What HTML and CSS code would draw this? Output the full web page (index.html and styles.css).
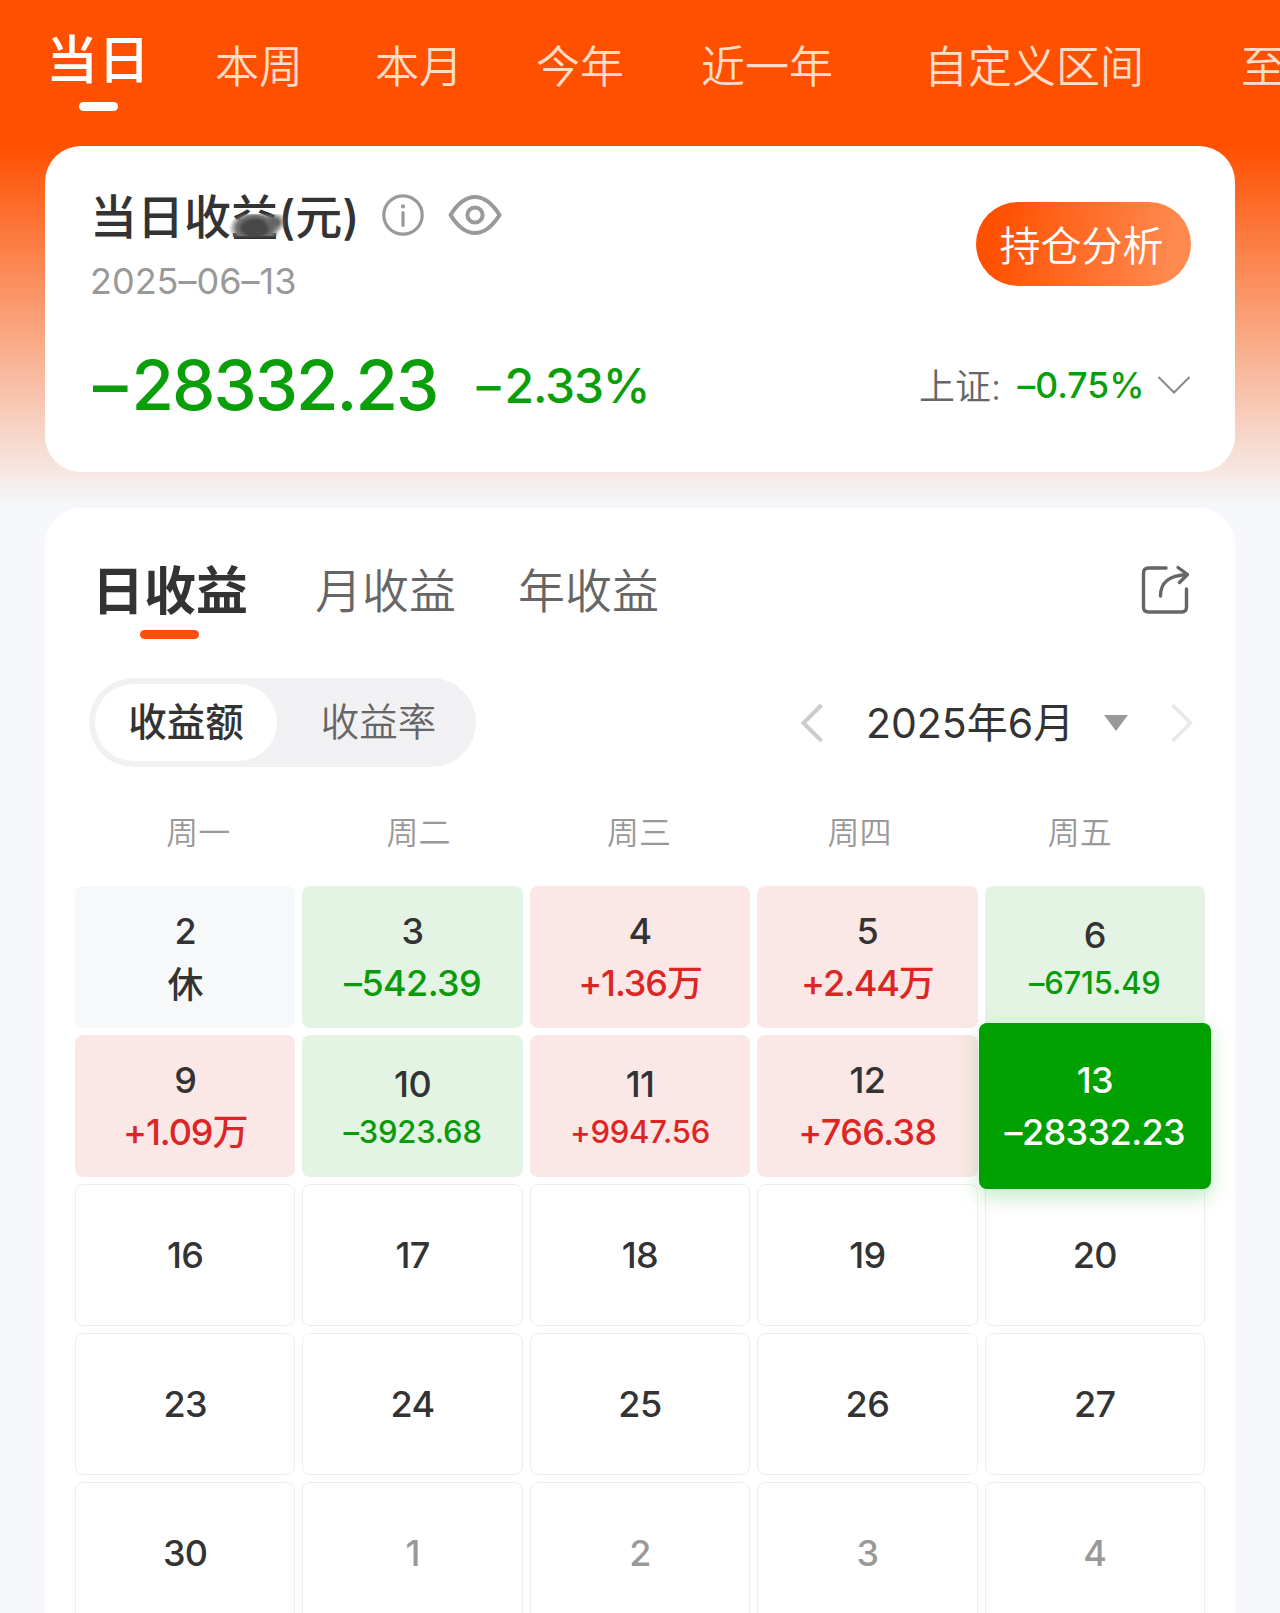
FILE: index.html
```html
<!DOCTYPE html>
<html lang="zh-CN">
<head>
<meta charset="utf-8">
<title>当日收益</title>
<link rel="stylesheet" href="styles.css">
</head>
<body>
<div class="page">
  <nav class="periods">
    <span class="period active">当日</span>
    <span class="period week">本周</span>
    <span class="period month">本月</span>
    <span class="period year">今年</span>
    <span class="period last-year">近一年</span>
    <span class="period custom">自定义区间</span>
    <span class="period since">至</span>
  </nav>

  <section class="card summary">
    <div class="summary-head">
      <div>
        <div class="title-row">
          <h1 class="title">当日收<span class="smudged">益</span>(元)</h1>
          <svg class="info" width="42" height="42" viewBox="0 0 42 42" fill="none" stroke="#999" stroke-width="3.2"><circle cx="21" cy="21" r="19.2"/><path d="M21 18.5v13" stroke-linecap="round"/><circle cx="21" cy="12.4" r="2.1" fill="#999" stroke="none"/></svg>
          <svg class="eye" width="54" height="42" viewBox="0 0 54 42" fill="none" stroke="#999" stroke-width="4"><path d="M2.500 21C10 9 18.500 3 27 3S44 9 51.500 21C44 33 35.500 39 27 39S10 33 2.500 21Z" stroke-linejoin="round"/><circle cx="27" cy="21" r="7.600"/></svg>
        </div>
        <div class="date">2025–06–13</div>
      </div>
      <button class="analysis">持仓分析</button>
    </div>
    <div class="figures">
      <span class="amount"><span class="sign">–</span>28332.23</span>
      <span class="rate"><span class="sign">–</span>2.33%</span>
      <span class="index-name">上证:</span>
      <span class="index-rate">–0.75%</span>
      <svg class="expand" width="34" height="20" viewBox="0 0 34 20" fill="none" stroke="#888" stroke-width="2"><path d="M1.500 2L17 17.500 32.500 2"/></svg>
    </div>
  </section>

  <section class="card detail">
    <div class="tabs">
      <span class="tab current">日收益</span>
      <span class="tab monthly">月收益</span>
      <span class="tab yearly">年收益</span>
      <svg class="share" width="50" height="50" viewBox="0 0 50 50" fill="none" stroke="#666" stroke-width="3.400" stroke-linecap="round" stroke-linejoin="round"><path d="M25 3H7.500Q2.500 3 2.500 8V42Q2.500 47 7.500 47H40.500Q45.500 47 45.500 42V24"/><path d="M19.500 31C19.500 18 27 10.500 46 9.500"/><path d="M37 2.500L46.500 9.500 38.500 17.500"/></svg>
    </div>
    <div class="controls">
      <div class="segment">
        <span class="option selected">收益额</span>
        <span class="option">收益率</span>
      </div>
      <div class="picker">
        <svg width="24" height="40" viewBox="0 0 24 40" fill="none" stroke="#ccc" stroke-width="4"><path d="M21.500 2L3.500 20l18 18"/></svg>
        <span class="month-name">2025年6月</span>
        <svg class="caret" width="24" height="16" viewBox="0 0 24 16" fill="#999"><path d="M0 0h24L12 16z"/></svg>
        <svg class="next" width="24" height="40" viewBox="0 0 24 40" fill="none" stroke="#e8e8e8" stroke-width="3.600"><path d="M2.500 2l18 18-18 18"/></svg>
      </div>
    </div>
    <div class="weekdays"><span>周一</span><span>周二</span><span>周三</span><span>周四</span><span>周五</span></div>
    <div class="calendar">
      <div class="day rest"><b>2</b><i>休</i></div>
      <div class="day loss"><b>3</b><i>–542.39</i></div>
      <div class="day gain"><b>4</b><i class="wan">+1.36万</i></div>
      <div class="day gain"><b>5</b><i class="wan">+2.44万</i></div>
      <div class="day loss"><b>6</b><i class="small">–6715.49</i></div>
      <div class="day gain"><b>9</b><i class="wan">+1.09万</i></div>
      <div class="day loss"><b>10</b><i class="small">–3923.68</i></div>
      <div class="day gain"><b>11</b><i class="small">+9947.56</i></div>
      <div class="day gain"><b>12</b><i>+766.38</i></div>
      <div class="day today"><b>13</b><i>–28332.23</i></div>
      <div class="day"><b>16</b></div>
      <div class="day"><b>17</b></div>
      <div class="day"><b>18</b></div>
      <div class="day"><b>19</b></div>
      <div class="day"><b>20</b></div>
      <div class="day"><b>23</b></div>
      <div class="day"><b>24</b></div>
      <div class="day"><b>25</b></div>
      <div class="day"><b>26</b></div>
      <div class="day"><b>27</b></div>
      <div class="day"><b>30</b></div>
      <div class="day other"><b>1</b></div>
      <div class="day other"><b>2</b></div>
      <div class="day other"><b>3</b></div>
      <div class="day other"><b>4</b></div>
    </div>
  </section>
</div>
</body>
</html>
```
FILE: styles.css
```css
* { box-sizing: border-box; }

body {
  margin: 0;
  background: #f5f7fa;
  color: #333;
  font-family: Inter, "Noto Sans CJK SC", sans-serif;
  font-feature-settings: "calt" 0;
}

svg { display: block; flex: none; }

.page {
  width: 1280px;
  height: 1613px;
  overflow: hidden;
  background: linear-gradient(#ff5000 146px, #f5f7fa 506px);
}

/* period tabs */
.periods {
  display: flex;
  height: 146px;
  padding-left: 46px;
  white-space: nowrap;
}

.period {
  flex: none;
  font-size: 44px;
  line-height: 135px;
  font-weight: 350;
  color: #ffdcc8;
}

.period.active {
  position: relative;
  width: 101px;
  font-size: 52px;
  line-height: 121px;
  font-weight: 500;
  color: #fff;
}

.period.active::after {
  content: "";
  position: absolute;
  left: 33px;
  top: 102px;
  width: 39px;
  height: 9px;
  border-radius: 4.5px;
  background: #fff;
}

.week { margin-left: 68px; }
.month { margin-left: 72px; }
.year { margin-left: 73px; }
.last-year { margin-left: 77px; }
.custom { margin-left: 91px; }
.since { margin-left: 97px; }

.card {
  width: 1190px;
  margin: 0 auto;
  border-radius: 36px;
  background: #fff;
}

/* summary */
.summary {
  height: 326px;
  padding: 40px 44px 0 45px;
}

.summary-head {
  display: flex;
  justify-content: space-between;
  height: 140px;
}

.title-row {
  display: flex;
  align-items: center;
  height: 58px;
}

.title {
  margin: 0;
  width: 270px;
  font-size: 47px;
  line-height: 58px;
  padding-top: 3px;
  font-weight: 500;
  white-space: nowrap;
}

.smudged { position: relative; }

.smudged::after {
  content: "";
  position: absolute;
  left: -2px;
  top: 26px;
  width: 56px;
  height: 25px;
  background:
    linear-gradient(#4a4a4a, #2c2c2c) 5px 22px / 42px 3px no-repeat,
    radial-gradient(ellipse 12px 10px at 46px 8px, #666 30%, transparent),
    radial-gradient(ellipse 26px 17px at 26px 14px, #484848 45%, #777 72%, transparent);
}

.info { margin-left: 22px; }
.eye { margin-left: 24px; }

.date {
  font-size: 36px;
  line-height: 74px;
  font-weight: 370;
  color: #999;
}

.analysis {
  width: 215px;
  height: 84px;
  margin-top: 16px;
  padding: 3px 4px 0 0;
  border: 0;
  border-radius: 42px;
  background: linear-gradient(100deg, #ff5000 10%, #ff8a50 90%);
  color: #fff;
  font: 350 41px/80px Inter, "Noto Sans CJK SC", sans-serif;
}

.figures {
  display: flex;
  align-items: center;
  height: 118px;
  color: #0a9f0a;
  font-weight: 500;
  white-space: nowrap;
}

.amount { width: 385px; padding-left: 3px; font-size: 69px; letter-spacing: -2px; }
.amount .sign { letter-spacing: 4px; }
.rate { width: 447px; padding-left: 3px; font-size: 48px; letter-spacing: -1.2px; }
.rate .sign { letter-spacing: 4px; }
.index-name { width: 99px; padding-bottom: 3px; font-size: 36px; font-weight: 350; color: #666; }
.index-rate { width: 140px; font-size: 35.500px; }

/* detail */
.detail {
  height: 1200px;
  margin-top: 36px;
}

.tabs {
  display: flex;
  align-items: center;
  height: 164px;
  padding: 0 44px 0 47px;
}

.tab {
  padding-top: 1px;
  font-size: 47px;
  line-height: 60px;
  font-weight: 350;
  color: #666;
}

.current {
  position: relative;
  padding-top: 4px;
  font-size: 52px;
  font-weight: 700;
  color: #333;
}

.current::after {
  content: "";
  position: absolute;
  left: 48px;
  top: 72px;
  width: 59px;
  height: 9px;
  border-radius: 4.5px;
  background: #ff4f0f;
}

.monthly { margin-left: 67px; }
.yearly { margin-left: 62px; }
.share { margin-left: auto; }

.controls {
  display: flex;
  align-items: center;
  height: 101px;
  padding: 0 41px 0 44px;
}

.segment {
  display: flex;
  width: 387px;
  height: 89px;
  padding: 6px;
  border-radius: 45px;
  background: #f1f1f4;
}

.option {
  width: 193px;
  padding-left: 10px;
  border-radius: 39px;
  font-size: 38.500px;
  line-height: 77px;
  font-weight: 350;
  text-align: center;
  color: #666;
}

.option.selected {
  width: 182px;
  padding-left: 0;
  background: #fff;
  font-weight: 500;
  color: #333;
}

.picker {
  display: flex;
  align-items: center;
  margin-left: auto;
}

.month-name {
  width: 208px;
  margin-left: 42px;
  padding-bottom: 5px;
  font-size: 41px;
  font-weight: 390;
  white-space: nowrap;
}

.caret { margin-left: 30px; }
.next { margin-left: 42px; }

.weekdays {
  display: grid;
  grid-template-columns: repeat(5, 1fr);
  height: 113px;
  padding: 0 45px 0 43px;
  font-size: 32px;
  line-height: 120px;
  font-weight: 350;
  text-align: center;
  color: #999;
}

.calendar {
  display: grid;
  grid-template-columns: repeat(5, 1fr);
  grid-auto-rows: 142px;
  gap: 7px;
  padding: 0 30px;
}

.day {
  display: flex;
  flex-direction: column;
  align-items: center;
  justify-content: center;
  border: 1px solid #eee;
  border-radius: 8px;
  font-size: 36px;
  line-height: 52px;
  font-weight: 500;
  letter-spacing: -0.6px;
  white-space: nowrap;
}

.day b { font-weight: inherit; }
.day i { font-style: normal; }
.day .small { font-size: 31px; line-height: 44px; letter-spacing: -0.2px; }
.day .wan { letter-spacing: -1.1px; }

.rest { background: #f6f8fa; border-color: transparent; }
.loss { background: #e3f4e4; border-color: transparent; }
.gain { background: #fce7e7; border-color: transparent; }
.rest i { padding-top: 2px; margin-bottom: -2px; }
.loss i { color: #0a9a0a; }
.gain i { color: #dc2626; }
.other { color: #999; }

.today {
  z-index: 1;
  margin: -12px -6px;
  border: 0;
  background: #00a000;
  box-shadow: 0 8px 20px rgba(0, 170, 30, 0.25);
  color: #fff;
}
```
